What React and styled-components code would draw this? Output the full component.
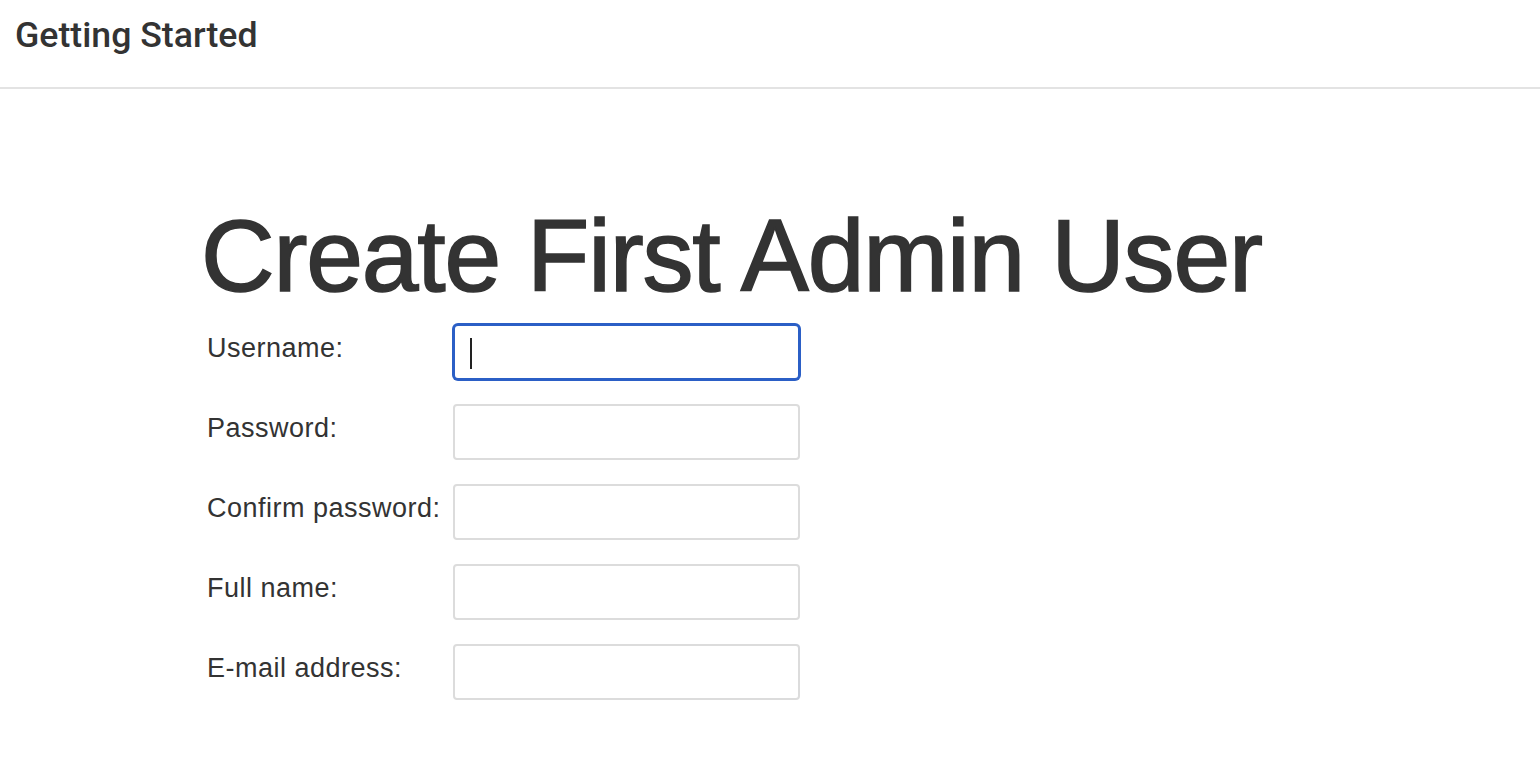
import React from "react";
import styled, { createGlobalStyle } from "styled-components";

const Global = createGlobalStyle`
  html, body { margin: 0; padding: 0; background: #fff; }
  body { font-family: "Liberation Sans", Arial, sans-serif; color: #333; }
`;

const Header = styled.header`
  height: 89px;
  border-bottom: 2px solid #e3e3e3;
  box-sizing: border-box;
  padding: 14px 0 0 15px;
`;

const HeaderTitle = styled.h1`
  margin: 0;
  font-family: Roboto, "Noto Sans", sans-serif;
  font-weight: 500;
  font-size: 35.7px;
  line-height: 42px;
  color: #333;
`;

const Main = styled.main`
  padding: 107px 0 0 201px;
`;

const Title = styled.h2`
  margin: 0;
  font-family: "Liberation Sans", Arial, sans-serif;
  font-weight: 400;
  font-size: 102px;
  line-height: 120px;
  color: #333;
  letter-spacing: -1.2px;
  -webkit-text-stroke: 1.6px #333;
`;

const Form = styled.form`
  display: grid;
  grid-template-columns: 246px 347px;
  row-gap: 24px;
  padding-left: 6px;
  margin-top: 8px;
`;

const Label = styled.label`
  font-size: 27px;
  letter-spacing: 0.5px;
  color: #333;
  align-self: start;
  padding-top: 9px;
  line-height: 31px;
  white-space: nowrap;
`;

const Input = styled.input`
  box-sizing: border-box;
  display: block;
  width: 347px;
  height: 56px;
  border: 2px solid ${(p) => (p.$focused ? "#2b5fc6" : "#dcdcdc")};
  ${(p) => (p.$focused ? "box-shadow: 0 0 0 1px #2b5fc6;" : "")}
  border-radius: ${(p) => (p.$focused ? "5px" : "4px")};
  font-size: 24px;
  padding: 0 14px;
  outline: none;
  font-family: "Liberation Sans", Arial, sans-serif;
  color: #333;
  background: #fff;
`;

const FieldWrap = styled.div`
  position: relative;
`;

const Caret = styled.span`
  position: absolute;
  left: 17px;
  top: 14px;
  width: 2px;
  height: 31px;
  background: #222;
`;

const fields = [
  { id: "username", label: "Username:", type: "text", focused: true },
  { id: "password1", label: "Password:", type: "password" },
  { id: "password2", label: "Confirm password:", type: "password" },
  { id: "fullname", label: "Full name:", type: "text" },
  { id: "email", label: "E-mail address:", type: "text" },
];

export default function App() {
  return (
    <>
      <Global />
      <Header>
        <HeaderTitle>Getting Started</HeaderTitle>
      </Header>
      <Main>
        <Title>Create First Admin User</Title>
        <Form onSubmit={(e) => e.preventDefault()}>
          {fields.map((f) => (
            <React.Fragment key={f.id}>
              <Label htmlFor={f.id}>{f.label}</Label>
              <FieldWrap>
                <Input id={f.id} type={f.type} $focused={f.focused} />
                {f.focused && <Caret />}
              </FieldWrap>
            </React.Fragment>
          ))}
        </Form>
      </Main>
    </>
  );
}
